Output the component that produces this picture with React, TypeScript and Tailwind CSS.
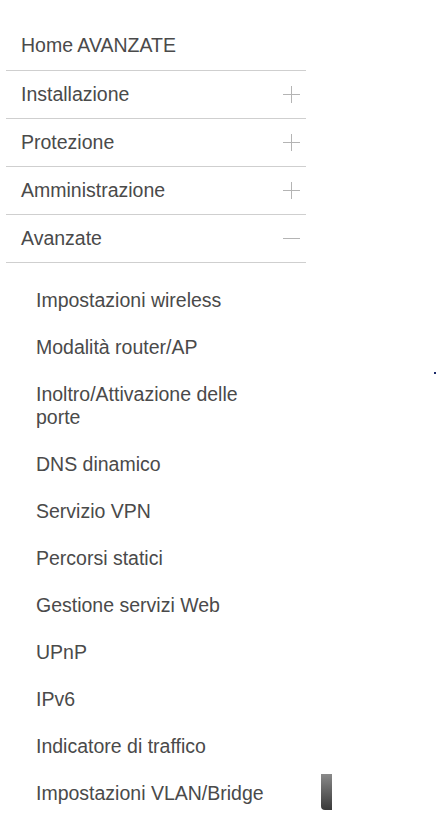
import { Fragment } from "react";

const sections = [
  { title: "Installazione", open: false },
  { title: "Protezione", open: false },
  { title: "Amministrazione", open: false },
  { title: "Avanzate", open: true },
];

const advancedLinks = [
  "Impostazioni wireless",
  "Modalità router/AP",
  "Inoltro/Attivazione delle porte",
  "DNS dinamico",
  "Servizio VPN",
  "Percorsi statici",
  "Gestione servizi Web",
  "UPnP",
  "IPv6",
  "Indicatore di traffico",
  "Impostazioni VLAN/Bridge",
];

function Toggle({ open }: { open: boolean }) {
  return (
    <svg width="17" height="17" viewBox="0 0 17 17" className="text-[#b4b4b4]">
      <path d="M0 8.5h17" stroke="currentColor" strokeWidth="1" />
      {!open && <path d="M8.5 0v17" stroke="currentColor" strokeWidth="1" />}
    </svg>
  );
}

export default function App() {
  return (
    <div className="relative min-h-[824px] w-[436px] bg-white font-['Liberation_Sans',Arial,sans-serif] text-[19.5px] text-[#4a4a4a]">
      <nav className="w-[300px] ml-[6px] pt-[22px]">
        <a href="#" className="flex h-[48px] items-center pl-[15px]">
          Home AVANZATE
        </a>
        {sections.map((s) => (
          <Fragment key={s.title}>
            <div className="flex h-[48px] items-center justify-between border-t border-[#cfcfcf] pl-[15px] pr-[6px]">
              <span>{s.title}</span>
              <Toggle open={s.open} />
            </div>
          </Fragment>
        ))}
        <div className="border-t border-[#cfcfcf]" />
        <ul className="pt-[14px] pl-[30px] w-[270px]">
          {advancedLinks.map((l) => (
            <li key={l} className="py-[12px] leading-[23px]">
              <a href="#">{l}</a>
            </li>
          ))}
        </ul>
      </nav>

      {/* frammento grigio in basso */}
      <div className="absolute left-[321px] top-[774px] h-[36px] w-[11px] rounded-bl-[4px] bg-gradient-to-b from-[#8a8a8a] to-[#3a3a3a]" />
      <div className="absolute left-[434px] top-[372px] h-[2px] w-[2px] bg-[#1a2a6a]" />
    </div>
  );
}
